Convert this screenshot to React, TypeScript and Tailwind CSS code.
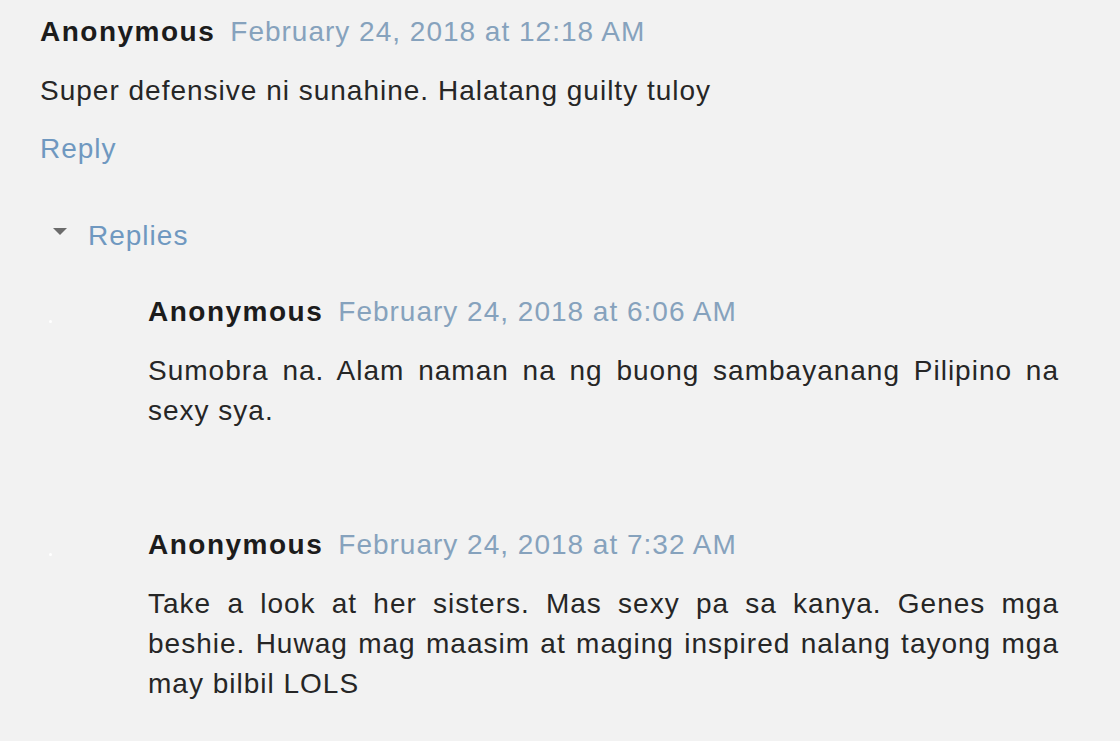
/* Blogger-style comment thread */

type Comment = {
  id: number;
  author: string;
  date: string;
  text: string;
};

const top: Comment = {
  id: 1,
  author: "Anonymous",
  date: "February 24, 2018 at 12:18 AM",
  text: "Super defensive ni sunahine. Halatang guilty tuloy",
};

const replies: Comment[] = [
  {
    id: 2,
    author: "Anonymous",
    date: "February 24, 2018 at 6:06 AM",
    text: "Sumobra na. Alam naman na ng buong sambayanang Pilipino na sexy sya.",
  },
  {
    id: 3,
    author: "Anonymous",
    date: "February 24, 2018 at 7:32 AM",
    text: "Take a look at her sisters. Mas sexy pa sa kanya. Genes mga beshie. Huwag mag maasim at maging inspired nalang tayong mga may bilbil LOLS",
  },
];

function Header({ c }: { c: Comment }) {
  return (
    <div className="flex items-baseline gap-[15px] h-10 leading-10">
      <span className="font-bold tracking-[1.5px] text-[#1c1c1c]">{c.author}</span>
      <span className="text-[#86a2bd]">{c.date}</span>
    </div>
  );
}

function ReplyItem({ c, first }: { c: Comment; first?: boolean }) {
  return (
    <div className={first ? "flex mt-9" : "flex mt-[94px]"}>
      {/* little avatar dot */}
      <div className="w-[108px] shrink-0 pt-[28px] pl-[9px]">
        <div className="w-[3px] h-[3px] rounded-full bg-white" />
      </div>
      <div className="flex-1 pr-[61px]">
        <Header c={c} />
        <p className="mt-[19px] text-justify">{c.text}</p>
      </div>
    </div>
  );
}

export default function App() {
  return (
    <div
      className="w-[1120px] h-[741px] overflow-hidden bg-[#f2f2f2] text-[28px] leading-10 tracking-[1px] text-[#262626]"
      style={{ fontFamily: '"Liberation Sans", Arial, sans-serif' }}
    >
      <div className="pl-10 pt-3">
        <Header c={top} />
        <p className="mt-[19px]">{top.text}</p>
        <div className="mt-[18px] text-[#6f98c0]">Reply</div>

        {/* REPLIES TOGGLE */}
        <div className="mt-[47px] flex items-center">
          <svg width="14" height="8" viewBox="0 0 14 8" className="ml-[13px] mr-[21px] -mt-2">
            <path d="M0 0 L14 0 L7 7 Z" fill="#6b6b6b" />
          </svg>
          <span className="text-[#6f98c0]">Replies</span>
        </div>

        {/* CHILD REPLIES */}
        <ReplyItem c={replies[0]} first />
        <ReplyItem c={replies[1]} />
      </div>
    </div>
  );
}
